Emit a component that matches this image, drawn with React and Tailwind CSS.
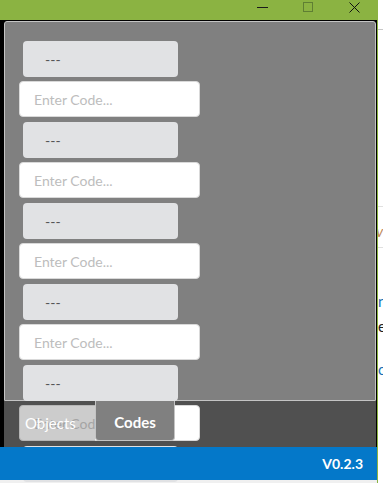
import React from "react";

const rows = [0, 1, 2, 3, 4];

function CodeBox() {
  return (
    <div className="ml-[4px] mb-[4px] flex h-[36px] w-[155px] shrink-0 items-center rounded-[4px] bg-[#e1e2e4] pl-[22px] text-[14px] text-[#555]">
      ---
    </div>
  );
}

function CodeInput() {
  return (
    <input
      type="text"
      placeholder="Enter Code..."
      className="mb-[5px] h-[36px] w-[181px] shrink-0 rounded-[4px] border border-[#d9d9d9] bg-white pl-[14px] text-[14px] text-[#333] placeholder-[#bdbdbd] outline-none"
    />
  );
}

export default function App() {
  return (
    <div className="relative flex h-[483px] w-[383px] overflow-hidden bg-white font-['Lato','Liberation_Sans',sans-serif]">
      <div className="flex w-[378px] flex-col border-r border-[#8bb342]">
        {/* title bar */}
        <div className="flex h-[20px] justify-end bg-[#8bb342]">
          <div className="flex w-[46px] justify-center pt-[7px]">
            <div className="h-px w-[11px] bg-[#1a1a1a]" />
          </div>
          <div className="flex w-[46px] justify-center pt-[2px]">
            <div className="h-[10px] w-[10px] border border-[#5f7f33]" />
          </div>
          <div className="flex w-[46px] justify-center pt-[2px]">
            <svg width="11" height="11" viewBox="0 0 11 11">
              <path d="M0.5 0.5 L10.5 10.5 M10.5 0.5 L0.5 10.5" stroke="#111" strokeWidth="1" />
            </svg>
          </div>
        </div>

        {/* window frame */}
        <div className="flex h-[427px] flex-col bg-black pl-[4px] pr-px pt-px">
          <div className="relative z-10 h-[380px] rounded-t-[3px] border border-[#c4c4c4] bg-[#808080]">
            <div className="flex flex-col items-start pl-[14px] pt-[19px]">
              {rows.map((r) => (
                <React.Fragment key={r}>
                  <CodeBox />
                  <CodeInput />
                </React.Fragment>
              ))}
              <CodeBox />
            </div>
          </div>
          <div className="relative flex-1 bg-[#505050]">
            <div className="absolute left-[15px] top-[4px] z-20 flex h-[36px] w-[76px] items-center rounded-l-[4px] bg-[rgba(128,128,128,0.4)] pl-[6px] text-[15px] text-white">
              Objects
            </div>
            <div className="absolute left-[91px] top-0 z-20 flex h-[40px] w-[80px] items-center justify-center rounded-b-[4px] border-x border-b border-[#c4c4c4] bg-[#808080] pt-[4px] text-[15px] font-bold text-white">
              Codes
            </div>
          </div>
        </div>

        {/* status bar */}
        <div className="relative z-20 flex h-[33px] items-center justify-end bg-[#0478c9] pr-[14px] text-[14px] font-bold text-white">
          V0.2.3
        </div>
        <div className="h-[3px] bg-[#f0f0f0]" />
      </div>

      {/* background app sliver */}
      <div className="flex w-[5px] flex-col overflow-hidden text-[15px] leading-none">
        <div className="mt-[29px] h-px bg-[#c8c8c8]" />
        <div className="mt-[176px] h-px bg-[#e0e0e0]" />
        <div className="mt-[17px] -ml-[2px] italic text-[#c08a5a]">vi</div>
        <div className="mt-[8px] h-px bg-[#e0e0e0]" />
        <div className="mt-[46px] text-[#1a6fb5]">n</div>
        <div className="mt-[10px] text-[#222]">e</div>
        <div className="mt-[28px] text-[#1a6fb5]">c</div>
      </div>
    </div>
  );
}
